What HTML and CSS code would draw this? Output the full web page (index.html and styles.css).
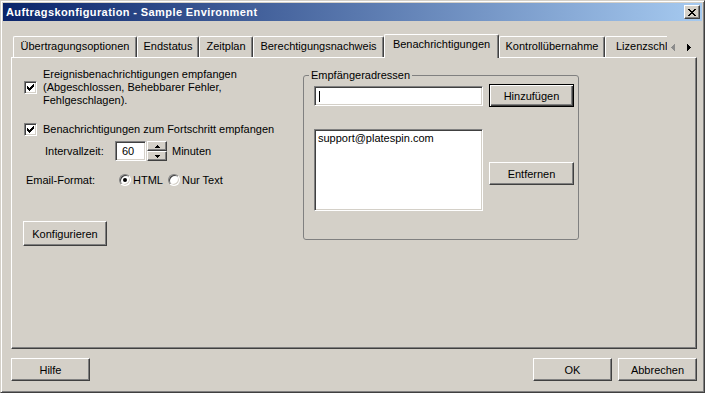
FILE: index.html
```html
<!DOCTYPE html>
<html lang="de">
<head>
    <meta charset="UTF-8">
    <title>Auftragskonfiguration - Sample Environment</title>
    <link rel="stylesheet" href="styles.css">
</head>
<body>
    <div class="window">
        <div class="titlebar">
            <span class="title">Auftragskonfiguration - Sample Environment</span>
            <span class="close-btn">
                <svg width="8" height="7" viewBox="0 0 8 7" shape-rendering="crispEdges"><path d="M0 0h2v1h-2z M6 0h2v1h-2z M1 1h2v1h-2z M5 1h2v1h-2z M2 2h4v1h-4z M3 3h2v1h-2z M2 4h4v1h-4z M1 5h2v1h-2z M5 5h2v1h-2z M0 6h2v1h-2z M6 6h2v1h-2z" fill="#000"/></svg>
            </span>
        </div>

        <div class="tabstrip">
            <div class="tabs">
                <div class="tab t1">Übertragungsoptionen</div>
                <div class="tab t2">Endstatus</div>
                <div class="tab t3">Zeitplan</div>
                <div class="tab t4">Berechtigungsnachweis</div>
                <div class="tab t5 selected">Benachrichtigungen</div>
                <div class="tab t6">Kontrollübernahme</div>
                <div class="tab t7">Lizenzschließung</div>
            </div>
            <div class="tab-arrows">
                <svg width="4" height="7" viewBox="0 0 4 7" shape-rendering="crispEdges"><path d="M3 0h1v7h-1z M2 1h1v5h-1z M1 2h1v3h-1z M0 3h1v1h-1z" fill="#8c8c8c"/></svg>
                <svg width="4" height="7" viewBox="0 0 4 7" shape-rendering="crispEdges"><path d="M0 0h1v7h-1z M1 1h1v5h-1z M2 2h1v3h-1z M3 3h1v1h-1z" fill="#000"/></svg>
            </div>
        </div>

        <div class="panel">
            <div class="left-col">
                <div class="check-row">
                    <span class="checkbox">
                        <svg width="7" height="7" viewBox="0 0 7 7" shape-rendering="crispEdges"><path d="M6 0h1v1h-1z M5 1h2v1h-2z M0 2h1v1h-1z M4 2h3v1h-3z M0 3h2v1h-2z M3 3h3v1h-3z M0 4h5v1h-5z M1 5h3v1h-3z M2 6h1v1h-1z" fill="#000"/></svg>
                    </span>
                    <span class="check-text">Ereignisbenachrichtigungen empfangen<br>(Abgeschlossen, Behebbarer Fehler,<br>Fehlgeschlagen).</span>
                </div>

                <div class="check-row second">
                    <span class="checkbox">
                        <svg width="7" height="7" viewBox="0 0 7 7" shape-rendering="crispEdges"><path d="M6 0h1v1h-1z M5 1h2v1h-2z M0 2h1v1h-1z M4 2h3v1h-3z M0 3h2v1h-2z M3 3h3v1h-3z M0 4h5v1h-5z M1 5h3v1h-3z M2 6h1v1h-1z" fill="#000"/></svg>
                    </span>
                    <span class="check-text">Benachrichtigungen zum Fortschritt empfangen</span>
                </div>

                <div class="interval-row">
                    <span class="interval-label">Intervallzeit:</span>
                    <span class="spin-input">60</span>
                    <span class="spinner">
                        <span class="spin-btn">
                            <svg width="5" height="3" viewBox="0 0 5 3" shape-rendering="crispEdges"><path d="M2 0h1v1h-1z M1 1h3v1h-3z M0 2h5v1h-5z" fill="#000"/></svg>
                        </span>
                        <span class="spin-btn">
                            <svg width="5" height="3" viewBox="0 0 5 3" shape-rendering="crispEdges"><path d="M0 0h5v1h-5z M1 1h3v1h-3z M2 2h1v1h-1z" fill="#000"/></svg>
                        </span>
                    </span>
                    <span class="unit">Minuten</span>
                </div>

                <div class="format-row">
                    <span class="format-label">Email-Format:</span>
                    <span class="radio checked"></span>
                    <span class="radio-text">HTML</span>
                    <span class="radio second"></span>
                    <span class="radio-text">Nur Text</span>
                </div>

                <div class="btn btn-konf">Konfigurieren</div>
            </div>

            <fieldset class="group">
                <legend>Empfängeradressen</legend>
                <div class="group-grid">
                    <div class="textbox"><span class="caret"></span></div>
                    <div class="btn btn-default">Hinzufügen</div>
                    <div class="listbox">support@platespin.com</div>
                    <div class="btn btn-remove">Entfernen</div>
                </div>
            </fieldset>
        </div>

        <div class="footer">
            <div class="btn btn-help">Hilfe</div>
            <div class="btn">OK</div>
            <div class="btn">Abbrechen</div>
        </div>
    </div>
</body>
</html>
```

FILE: styles.css
```css
* {
    box-sizing: border-box;
}
body {
    margin: 0;
    background: #d4d0c8;
    font-family: "Liberation Sans", Arial, sans-serif;
    font-size: 11px;
    color: #000;
}
.window {
    width: 705px;
    height: 393px;
    background: #d4d0c8;
    border: 1px solid;
    border-color: #d4d0c8 #404040 #404040 #d4d0c8;
    box-shadow: inset 1px 1px #fff, inset -1px -1px #808080;
    padding: 2px;
    display: flex;
    flex-direction: column;
}
.titlebar {
    height: 18px;
    display: flex;
    align-items: center;
    justify-content: space-between;
    padding: 0 2px 0 3px;
    background: linear-gradient(to right, #0a246a, #a6caf0);
}
.title {
    color: #fff;
    font-weight: bold;
    font-size: 11px;
    letter-spacing: 0.4px;
}
.close-btn {
    width: 16px;
    height: 14px;
    background: #d4d0c8;
    border: 1px solid;
    border-color: #fff #404040 #404040 #fff;
    box-shadow: inset -1px -1px #808080;
    display: flex;
    align-items: center;
    justify-content: center;
}

/* tabs */
.tabstrip {
    margin: 13px 0 0 8px;
    height: 23px;
    display: flex;
}
.tabs {
    width: 656px;
    height: 24px;
    margin-bottom: -1px;
    padding-left: 2px;
    display: flex;
    align-items: flex-start;
    overflow: hidden;
    position: relative;
    z-index: 1;
}
.tab {
    flex-shrink: 0;
    height: 21px;
    margin-top: 2px;
    border-top: 1px solid #fff;
    border-left: 1px solid #fff;
    border-right: 1px solid #404040;
    box-shadow: inset -1px 0 #808080;
    border-radius: 2px 2px 0 0;
    line-height: 19px;
    text-align: center;
    white-space: nowrap;
    overflow: hidden;
}
.tab.selected {
    height: 24px;
    margin-top: 0;
    background: #d4d0c8;
    line-height: 18px;
}
.t1 { width: 124px; }
.t2 { width: 62px; }
.t3 { width: 54px; }
.t4 { width: 131px; }
.t5 { width: 115px; }
.t6 { width: 106px; }
.t7 { width: 100px; text-align: left; padding-left: 10px; }
.tab-arrows {
    display: flex;
    gap: 12px;
    padding: 10px 0 0 4px;
}

/* panel */
.panel {
    height: 292px;
    margin: 0 5px 0 8px;
    border: 1px solid;
    border-color: #fff #404040 #404040 #fff;
    box-shadow: inset -1px -1px #808080;
    display: flex;
}
.left-col {
    width: 291px;
    padding: 10px 0 0 11px;
}
.check-row {
    display: flex;
    align-items: center;
    margin-left: 1px;
    line-height: 13px;
}
.check-row.second {
    margin-top: 16px;
}
.check-text {
    margin-left: 6px;
}
.checkbox {
    width: 13px;
    height: 13px;
    flex-shrink: 0;
    background: #fff;
    border: 1px solid;
    border-color: #808080 #fff #fff #808080;
    box-shadow: inset 1px 1px #404040, inset -1px -1px #d4d0c8;
    display: flex;
    align-items: center;
    justify-content: center;
}
.interval-row {
    display: flex;
    align-items: center;
    margin-top: 5px;
    height: 20px;
}
.interval-label {
    width: 70px;
    margin-left: 22px;
}
.spin-input {
    width: 31px;
    height: 20px;
    padding: 3px 0 0 6px;
    background: #fff;
    border: 1px solid;
    border-color: #808080 #fff #fff #808080;
    box-shadow: inset 1px 1px #404040, inset -1px -1px #d4d0c8;
}
.spinner {
    width: 20px;
    height: 20px;
    margin-left: 1px;
    display: flex;
    flex-direction: column;
}
.spin-btn {
    height: 10px;
    border: 1px solid;
    border-color: #fff #404040 #404040 #fff;
    box-shadow: inset -1px -1px #808080;
    display: flex;
    align-items: center;
    justify-content: center;
}
.unit {
    margin-left: 5px;
}
.format-row {
    display: flex;
    align-items: center;
    margin-top: 12px;
    height: 13px;
}
.format-label {
    width: 93px;
    margin-left: 3px;
}
.radio {
    width: 12px;
    height: 12px;
    flex-shrink: 0;
    border-radius: 50%;
    background: #fff;
    border: 1px solid;
    border-color: #808080 #fff #fff #808080;
    box-shadow: inset 1px 1px #404040, inset -1px -1px #d4d0c8;
    display: flex;
    align-items: center;
    justify-content: center;
}
.radio.checked::after {
    content: "";
    width: 4px;
    height: 4px;
    border-radius: 50%;
    background: #000;
}
.radio.second {
    margin-left: 5px;
}
.radio-text {
    margin-left: 2px;
}

/* buttons */
.btn {
    width: 79px;
    height: 23px;
    border: 1px solid;
    border-color: #fff #404040 #404040 #fff;
    box-shadow: inset -1px -1px #808080;
    display: flex;
    align-items: center;
    justify-content: center;
    white-space: nowrap;
}
.btn-konf {
    width: 84px;
    height: 25px;
    margin-top: 35px;
}
.btn-default {
    width: 85px;
    border-color: #000;
    box-shadow: inset 1px 1px #fff, inset -1px -1px #404040, inset -2px -2px #808080;
}
.btn-remove {
    width: 85px;
    align-self: start;
    margin-top: 33px;
}

/* group box */
.group {
    width: 276px;
    height: 171px;
    margin: 11px 0 0 0;
    padding: 2px 4px 0 10px;
    border: 1px solid #808080;
    border-radius: 3px;
}
.group legend {
    margin-left: -5px;
    padding: 0 2px;
    line-height: 13px;
}
.group-grid {
    display: grid;
    grid-template-columns: 169px 85px;
    column-gap: 6px;
    row-gap: 22px;
    align-items: center;
}
.textbox {
    height: 20px;
    padding: 4px 0 0 4px;
    background: #fff;
    border: 1px solid;
    border-color: #808080 #fff #fff #808080;
    box-shadow: inset 1px 1px #404040, inset -1px -1px #d4d0c8;
}
.caret {
    display: block;
    width: 1px;
    height: 11px;
    background: #000;
}
.listbox {
    height: 82px;
    align-self: start;
    padding: 2px 3px;
    line-height: 13px;
    background: #fff;
    border: 1px solid;
    border-color: #808080 #fff #fff #808080;
    box-shadow: inset 1px 1px #404040, inset -1px -1px #d4d0c8;
}

/* footer */
.footer {
    display: flex;
    gap: 6px;
    margin: 9px 5px 0 8px;
}
.btn-help {
    margin-right: auto;
}
```
